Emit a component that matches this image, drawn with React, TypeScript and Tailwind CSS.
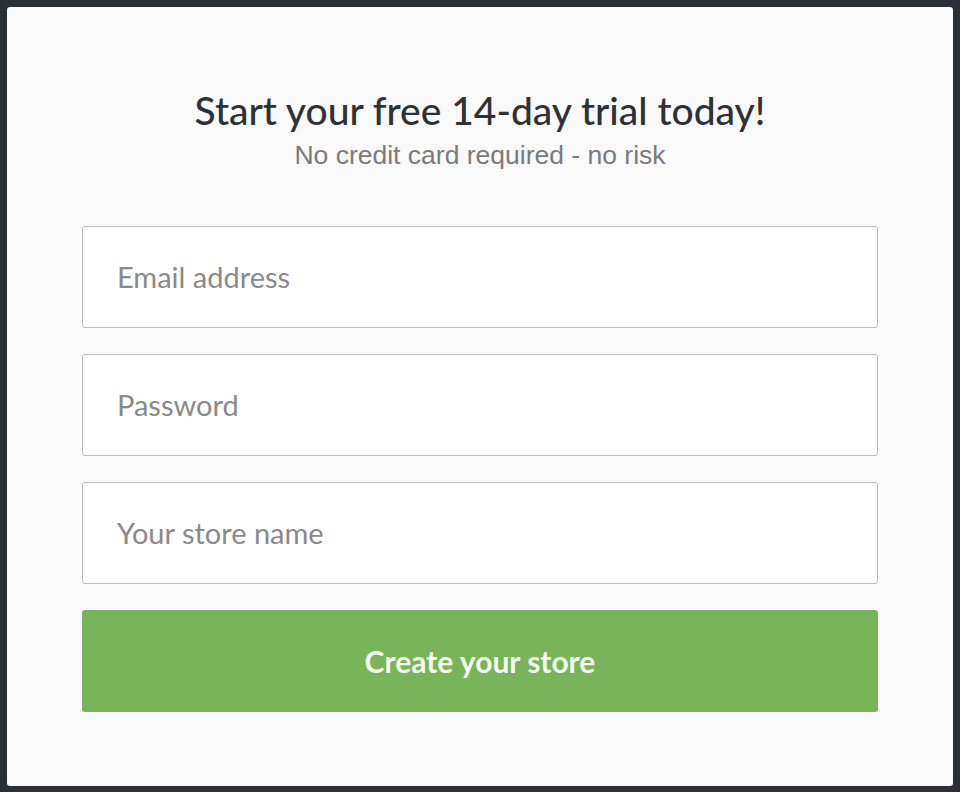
import React from "react";

export default function App() {
  return (
    <div className="w-[960px] h-[792px] bg-[#2b3036] pt-[7px] pl-[7px]">
      <div className="w-[946px] h-[779px] bg-[#f9f9f9] rounded-[3px] flex flex-col items-center pt-[80px]">
        <h1 className="text-[39px] leading-[46px] text-[#2f3234] font-['Lato',sans-serif] font-medium">
          Start your free 14-day trial today!
        </h1>
        <p className="text-[26.5px] leading-[30px] text-[#7b7b7b] font-['Liberation_Sans',Arial,sans-serif] mt-[7px]">
          No credit card required - no risk
        </p>
        <div className="w-[796px] mt-[56px] flex flex-col gap-[26px]">
          {["Email address", "Password", "Your store name"].map((p) => (
            <div
              key={p}
              className="h-[102px] bg-white border border-[#bdbdbd] rounded-[3px] flex items-center pl-[34px] text-[29px] text-[#8a8a8a] font-['Lato',sans-serif]"
            >
              {p}
            </div>
          ))}
          <button className="h-[102px] bg-[#78b45a] rounded-[3px] text-[30px] font-bold text-[#f4fbef] font-['Lato',sans-serif]">
            Create your store
          </button>
        </div>
      </div>
    </div>
  );
}
